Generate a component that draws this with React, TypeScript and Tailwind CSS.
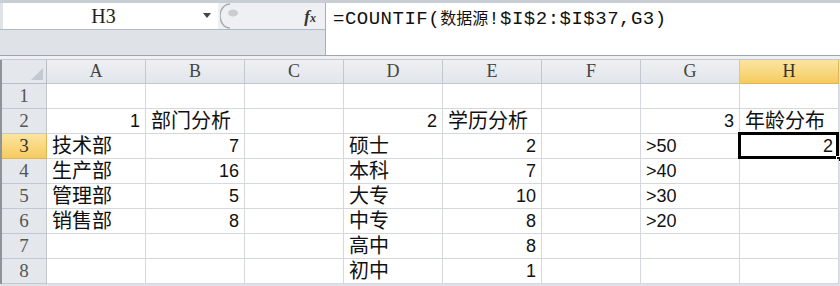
import React from 'react'

const cols = ['A', 'B', 'C', 'D', 'E', 'F', 'G', 'H']

type Cell = { v: string; right?: boolean; num?: boolean }

// row -> col -> cell
const data: Record<number, Record<string, Cell>> = {
    2: {
        A: { v: '1', right: true, num: true },
        B: { v: '部门分析' },
        D: { v: '2', right: true, num: true },
        E: { v: '学历分析' },
        G: { v: '3', right: true, num: true },
        H: { v: '年龄分布' },
    },
    3: {
        A: { v: '技术部' },
        B: { v: '7', right: true, num: true },
        D: { v: '硕士' },
        E: { v: '2', right: true, num: true },
        G: { v: '>50', num: true },
        H: { v: '2', right: true, num: true },
    },
    4: {
        A: { v: '生产部' },
        B: { v: '16', right: true, num: true },
        D: { v: '本科' },
        E: { v: '7', right: true, num: true },
        G: { v: '>40', num: true },
    },
    5: {
        A: { v: '管理部' },
        B: { v: '5', right: true, num: true },
        D: { v: '大专' },
        E: { v: '10', right: true, num: true },
        G: { v: '>30', num: true },
    },
    6: {
        A: { v: '销售部' },
        B: { v: '8', right: true, num: true },
        D: { v: '中专' },
        E: { v: '8', right: true, num: true },
        G: { v: '>20', num: true },
    },
    7: {
        D: { v: '高中' },
        E: { v: '8', right: true, num: true },
    },
    8: {
        D: { v: '初中' },
        E: { v: '1', right: true, num: true },
    },
}

const mono = { fontFamily: '"Liberation Mono", "Noto Sans CJK SC", monospace' }
const serif = { fontFamily: '"Liberation Serif", serif' }
const cellFont = { fontFamily: '"Liberation Sans", "Noto Sans CJK SC", sans-serif' }

function FormulaBar() {
    return (
        <div className="flex h-[56px] border-t-[3px] border-b border-t-[#c9ced5] border-b-[#9ea5ae] bg-[#dfe2e7]">
            {/* name box + fx */}
            <div className="flex w-[325px] flex-col">
                <div className="flex h-[27px] border-b border-[#b3b9c1]">
                    <div className="ml-[3px] flex w-[215px] items-center bg-white">
                        <div className="flex-1 pl-[2px] text-center text-[20px] leading-none text-[#222]" style={serif}>H3</div>
                        <svg width="10" height="6" viewBox="0 0 10 6" className="mr-[6px]">
                            <path d="M1 0 L9 0 L5 5 Z" fill="#444" />
                        </svg>
                    </div>
                    <div className="flex flex-1 items-center bg-[#eef0f3]">
                        <svg width="20" height="26" viewBox="0 0 20 26" className="ml-[2px]">
                            <path d="M10 1 A10 12 0 0 0 10 25" fill="none" stroke="#a9aeb5" strokeWidth="1.5" />
                            <ellipse cx="13" cy="10" rx="5" ry="3.5" fill="#c9cdd2" />
                        </svg>
                        <div className="ml-auto mr-[9px] text-[17px] italic font-bold leading-none text-[#333]" style={serif}>
                            f<span className="text-[12px]">x</span>
                        </div>
                    </div>
                </div>
                <div className="flex-1" />
            </div>
            {/* formula text */}
            <div className="flex-1 border-l border-[#a7aeb7] bg-white pl-[7px] pt-[6px]">
                <div className="text-[19px] leading-none tracking-[0.5px] text-[#111]" style={mono}>
                    =COUNTIF(<span className="text-[16px] tracking-normal" style={{ fontFamily: '"Noto Sans CJK SC", sans-serif' }}>数据源</span>!$I$2:$I$37,G3)
                </div>
            </div>
        </div>
    )
}

function Grid() {
    const rows = [1, 2, 3, 4, 5, 6, 7, 8]
    return (
        <div className="border-l-2 border-[#8d939b]">
            {/* column header */}
            <div className="flex h-[24px]">
                <div className="flex w-[45px] items-end justify-end border-r border-b border-[#b9bfc7] bg-[#e4e7ec] pr-[3px] pb-[3px]">
                    <svg width="12" height="12" viewBox="0 0 12 12">
                        <path d="M12 0 L12 12 L0 12 Z" fill="#c4c9cf" />
                    </svg>
                </div>
                {cols.map((c) => (
                    <div
                        key={c}
                        className={
                            c === 'H'
                                ? 'flex w-[99px] items-center justify-center border-r border-b border-[#e2b54f] bg-gradient-to-b from-[#fbe59f] to-[#f5cb5f] text-[18px] text-[#333]'
                                : 'flex w-[99px] items-center justify-center border-r border-b border-[#c2c8cf] bg-gradient-to-b from-[#eef0f3] to-[#e2e5ea] text-[18px] text-[#444]'
                        }
                        style={serif}
                    >
                        {c}
                    </div>
                ))}
            </div>
            {rows.map((r) => (
                <div key={r} className="flex h-[25px]">
                    <div
                        className={
                            r === 3
                                ? 'flex w-[45px] items-center justify-center border-r border-b border-[#e2b54f] bg-gradient-to-b from-[#fbe59f] to-[#f5cb5f] text-[19px] text-[#333]'
                                : 'flex w-[45px] items-center justify-center border-r border-b border-[#c2c8cf] bg-[#e4e7ec] text-[19px] text-[#555]'
                        }
                        style={serif}
                    >
                        {r}
                    </div>
                    {cols.map((c) => {
                        const cell = data[r]?.[c]
                        const sel = r === 3 && c === 'H'
                        return (
                            <div
                                key={c}
                                className={`relative flex w-[99px] items-center whitespace-nowrap border-r border-b border-[#d4d8de] bg-white px-[5px] text-[#111] ${cell?.right ? 'justify-end' : 'justify-start'}`}
                                style={cellFont}
                            >
                                {cell ? (
                                    <span className={cell.num ? 'text-[18px] leading-none' : 'text-[20px] leading-none'}>{cell.v}</span>
                                ) : null}
                                {sel ? (
                                    <>
                                        <div className="absolute -left-[2px] -top-[2px] -right-[1px] -bottom-[1px] border-[3px] border-black" />
                                        <div className="absolute -right-[4px] -bottom-[4px] h-[6px] w-[6px] border border-white bg-black" />
                                    </>
                                ) : null}
                            </div>
                        )
                    })}
                </div>
            ))}
        </div>
    )
}

export default function App() {
    return (
        <div className="h-[286px] w-[840px] overflow-hidden bg-[#dfe2e7]">
            <FormulaBar />
            <div className="h-[4px] border-b border-[#c4c9d0] bg-[#eef0f3]" />
            <Grid />
        </div>
    )
}
